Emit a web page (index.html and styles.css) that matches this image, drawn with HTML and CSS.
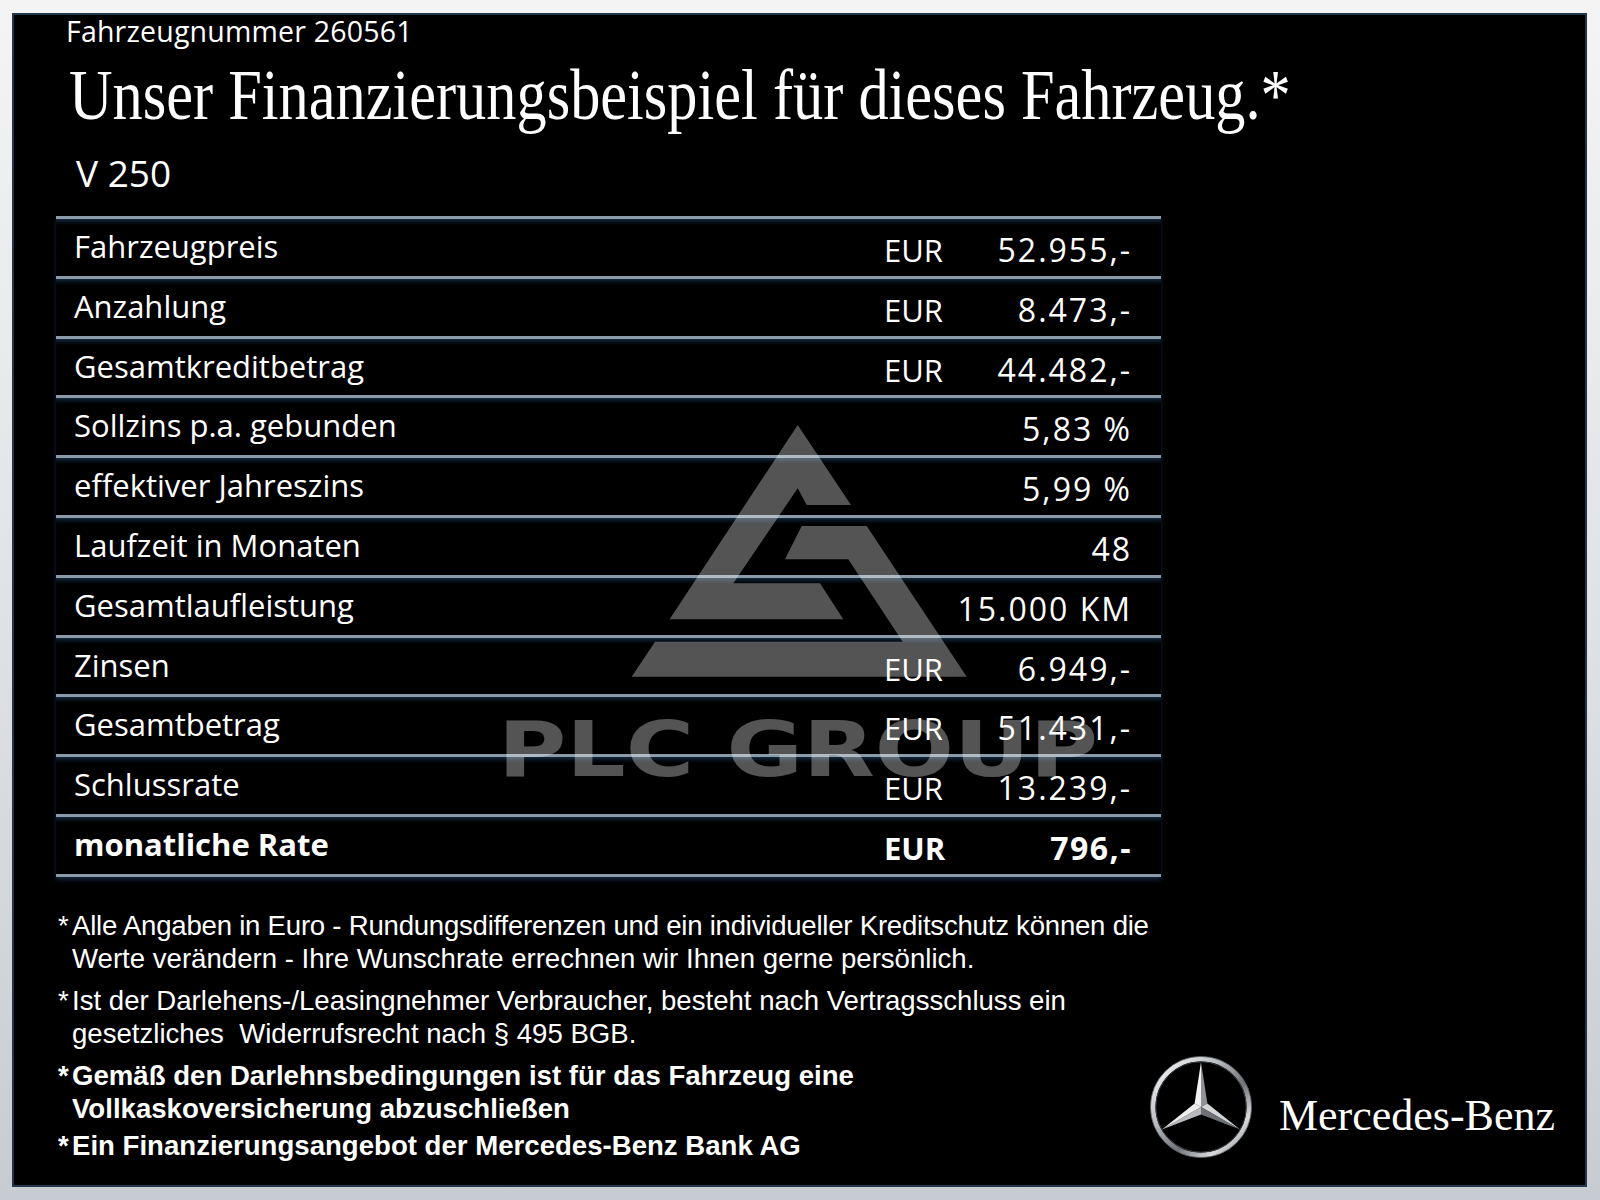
FILE: index.html
```html
<!DOCTYPE html>
<html lang="de">
<head>
<meta charset="utf-8">
<title>Finanzierungsbeispiel V 250</title>
<link rel="stylesheet" href="styles.css">
</head>
<body>
<div class="page">
  <div class="board">
    <div class="fzn">Fahrzeugnummer 260561</div>
    <h1 class="title">Unser Finanzierungsbeispiel für dieses Fahrzeug.*</h1>
    <div class="model">V 250</div>

    <div class="table">
      <div class="row"><span class="label">Fahrzeugpreis</span><span class="amt"><span class="cur">EUR</span><span class="val">52.955,-</span></span></div>
      <div class="row"><span class="label">Anzahlung</span><span class="amt"><span class="cur">EUR</span><span class="val">8.473,-</span></span></div>
      <div class="row"><span class="label">Gesamtkreditbetrag</span><span class="amt"><span class="cur">EUR</span><span class="val">44.482,-</span></span></div>
      <div class="row"><span class="label">Sollzins p.a. gebunden</span><span class="amt"><span class="val">5,83 %</span></span></div>
      <div class="row"><span class="label">effektiver Jahreszins</span><span class="amt"><span class="val">5,99 %</span></span></div>
      <div class="row"><span class="label">Laufzeit in Monaten</span><span class="amt"><span class="val">48</span></span></div>
      <div class="row"><span class="label">Gesamtlaufleistung</span><span class="amt"><span class="val">15.000 KM</span></span></div>
      <div class="row"><span class="label">Zinsen</span><span class="amt"><span class="cur">EUR</span><span class="val">6.949,-</span></span></div>
      <div class="row"><span class="label">Gesamtbetrag</span><span class="amt"><span class="cur">EUR</span><span class="val">51.431,-</span></span></div>
      <div class="row"><span class="label">Schlussrate</span><span class="amt"><span class="cur">EUR</span><span class="val">13.239,-</span></span></div>
      <div class="row row-total"><span class="label">monatliche Rate</span><span class="amt"><span class="cur">EUR</span><span class="val">796,-</span></span></div>
    </div>

    <div class="footer">
      <div class="notes">
        <p class="note"><span class="star">*</span><span class="tight">Alle Angaben in Euro - Rundungsdifferenzen und ein individueller Kreditschutz können die</span><br>Werte verändern - Ihre Wunschrate errechnen wir Ihnen gerne persönlich.</p>
        <p class="note"><span class="star">*</span>Ist der Darlehens-/Leasingnehmer Verbraucher, besteht nach Vertragsschluss ein<br>gesetzliches &nbsp;Widerrufsrecht nach § 495 BGB.</p>
        <p class="note note-bold"><span class="star">*</span>Gemäß den Darlehnsbedingungen ist für das Fahrzeug eine<br>Vollkaskoversicherung abzuschließen</p>
        <p class="note note-bold"><span class="star">*</span>Ein Finanzierungsangebot der Mercedes-Benz Bank AG</p>
      </div>
      <div class="brand">
        <svg class="star-logo" width="104" height="104" viewBox="0 0 104 104" aria-hidden="true">
          <defs>
            <linearGradient id="ring" x1="0" y1="0" x2="1" y2="1">
              <stop offset="0" stop-color="#ffffff"/>
              <stop offset="0.35" stop-color="#b9bcc0"/>
              <stop offset="0.6" stop-color="#6f7378"/>
              <stop offset="0.8" stop-color="#d8dadc"/>
              <stop offset="1" stop-color="#7d8185"/>
            </linearGradient>
          </defs>
          <circle cx="52" cy="52" r="48" fill="none" stroke="url(#ring)" stroke-width="5"/>
          <circle cx="52" cy="52" r="45.2" fill="none" stroke="#3a3d40" stroke-width="1"/>
          <circle cx="52" cy="52" r="50.6" fill="none" stroke="#55595d" stroke-width="0.8"/>
          <polygon points="52,7 45.6,48.5 52,52" fill="#f2f2f2"/>
          <polygon points="52,7 58.4,48.5 52,52" fill="#8e9195"/>
          <polygon points="58.4,48.5 91,74.5 52,52" fill="#d4d6d8"/>
          <polygon points="52,59.5 91,74.5 52,52" fill="#6e7175"/>
          <polygon points="52,59.5 13,74.5 52,52" fill="#b8babd"/>
          <polygon points="45.6,48.5 13,74.5 52,52" fill="#eeeeee"/>
        </svg>
        <span class="brand-name">Mercedes-Benz</span>
      </div>
    </div>

    <svg class="watermark" width="640" height="370" viewBox="0 0 640 370" aria-hidden="true">
      <polygon points="317.7,5 371,85 326.7,85 317.7,68.3 253.3,163.3 340,163.3 363.3,199.3 189.6,199.3"/>
      <polygon points="321.7,106 386.7,106 486.7,256.7 151.7,256.7 175,221.7 422.7,221.7 368.3,139.3 305,139.3"/>
      <text x="18" y="356" textLength="600" lengthAdjust="spacingAndGlyphs">PLC GROUP</text>
    </svg>
  </div>
</div>
</body>
</html>
```

FILE: styles.css
```css
html, body {
  margin: 0;
  padding: 0;
}

body {
  width: 1600px;
  height: 1200px;
  background: linear-gradient(180deg, #f4f4f4 0%, #e2e5e8 45%, #c7ccd2 100%);
  font-family: "Open Sans", "Noto Sans", sans-serif;
  color: #ffffff;
  overflow: hidden;
}

.page {
  padding: 13px 13px 13px 12px;
}

.board {
  position: relative;
  box-sizing: border-box;
  width: 1575px;
  height: 1174px;
  background: #000;
  border: 2px solid #22364a;
  padding: 1px 0 0 42px;
  display: flex;
  flex-direction: column;
  align-items: flex-start;
}

.fzn {
  margin-left: 10px;
  font-size: 28.5px;
  line-height: 30px;
  letter-spacing: 0.2px;
}

.title {
  margin: 0 0 0 13px;
  font-family: "Liberation Serif", "Times New Roman", serif;
  font-weight: normal;
  font-size: 71px;
  line-height: 98px;
  white-space: nowrap;
  transform: scaleX(0.85);
  transform-origin: 0 50%;
}

.model {
  margin: 7px 0 0 20px;
  font-size: 37px;
  line-height: 44px;
}

.table {
  margin-top: 21px;
  width: 1105px;
  border-bottom: 3px solid #8b9aa8;
  box-shadow: 0 3px 4px #11233a;
}

.row {
  box-sizing: border-box;
  height: 59.8px;
  border-top: 3px solid #8b9aa8;
  background: linear-gradient(180deg, #14283c 0px, #06101a 3px, #000 6px);
  display: flex;
  align-items: flex-start;
  font-size: 31px;
}

.label {
  flex: 1;
  padding-left: 18px;
  line-height: 54.8px;
  white-space: nowrap;
}

.amt {
  width: 248px;
  margin-right: 29px;
  padding-top: 4px;
  line-height: 54.8px;
  display: flex;
  justify-content: space-between;
  align-items: baseline;
  white-space: nowrap;
}

.cur {
  font-size: 31px;
}

.val {
  margin-left: auto;
  font-size: 32px;
  letter-spacing: 2px;
}

.row-total {
  font-weight: 700;
}

.row-total .val {
  letter-spacing: 1.5px;
}

.footer {
  margin-top: 32px;
  width: 1529px;
  display: flex;
  align-items: flex-end;
}

.notes {
  flex: 1;
  min-width: 0;
  margin-left: 2px;
  font-family: "Liberation Sans", Arial, sans-serif;
  font-size: 27.6px;
  line-height: 33.5px;
  display: flex;
  flex-direction: column;
}

.note {
  margin: 0;
  padding-left: 14px;
  text-indent: -14px;
  white-space: nowrap;
}

.tight {
  letter-spacing: -0.24px;
}

.note:nth-child(2) {
  margin-top: 8px;
}

.note:nth-child(3) {
  margin-top: 8px;
}

.note:nth-child(4) {
  margin-top: 3px;
}

.note-bold {
  font-weight: 700;
}

.star {
  display: inline-block;
  width: 14px;
  text-indent: 0;
}

.brand {
  flex-shrink: 0;
  display: flex;
  align-items: center;
  gap: 26px;
  margin-bottom: 3px;
  margin-right: 30px;
}

.star-logo {
  display: block;
}

.brand-name {
  font-family: "Liberation Serif", "Times New Roman", serif;
  font-size: 44px;
  line-height: 44px;
  padding-top: 18px;
  white-space: nowrap;
}

.watermark {
  position: absolute;
  left: 466px;
  top: 405px;
  pointer-events: none;
  fill: rgba(255, 255, 255, 0.33);
}

.watermark text {
  font-family: "DejaVu Sans", sans-serif;
  font-weight: 700;
  font-size: 76px;
}
```
